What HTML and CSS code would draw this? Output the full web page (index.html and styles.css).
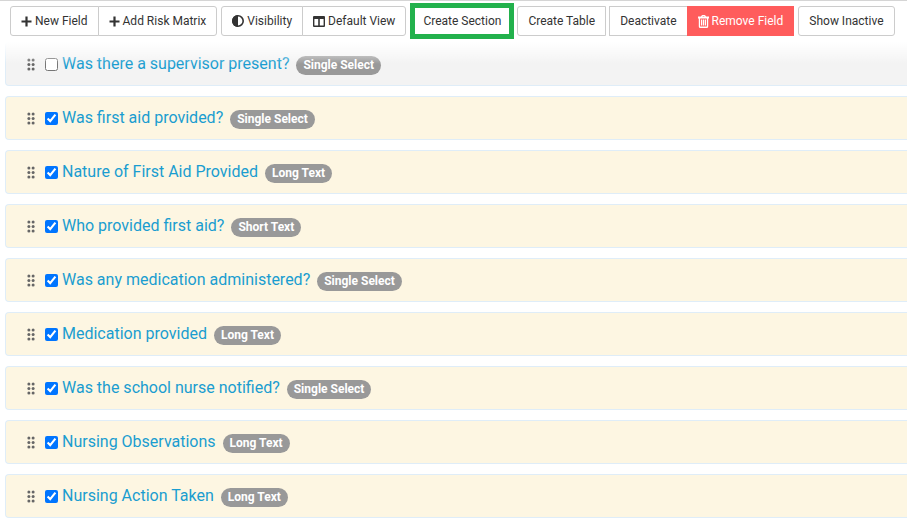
FILE: index.html
```html
<!DOCTYPE html>
<html lang="en">
<head>
<meta charset="utf-8">
<title>Form fields</title>
<link rel="stylesheet" href="styles.css">
</head>
<body>
<svg class="defs" aria-hidden="true">
  <symbol id="plus" viewBox="0 0 11 11"><path d="M4.4 0.5h2.2v3.9h3.9v2.2H6.6v3.9H4.4V6.6H.5V4.4h3.9z"/></symbol>
  <symbol id="contrast" viewBox="0 0 12 12"><circle cx="6" cy="6" r="5.2" fill="none" stroke="currentColor" stroke-width="1.6"/><path d="M6 0a6 6 0 0 0 0 12z"/></symbol>
  <symbol id="columns" viewBox="0 0 12 11"><path fill-rule="evenodd" d="M1 0h10a1 1 0 0 1 1 1v9a1 1 0 0 1-1 1H1a1 1 0 0 1-1-1V1a1 1 0 0 1 1-1zm.4 3v6.4h3.8V3zm5.4 0v6.4h3.8V3z"/></symbol>
  <symbol id="trash" viewBox="0 0 11 13"><path fill-rule="evenodd" d="M3 1.6 3.6.6Q3.9 0 4.5 0h2q.6 0 .9.6l.6 1h3v1.8h-.8v8q0 1.6-1.5 1.6H2.3Q.8 13 .8 11.4v-8H0V1.6zm1.5 0h2l-.3-.5H4.8zM2.1 3.4v8.2h6.8V3.4zM3 4.6h1.2v5.8H3zm1.9 0h1.2v5.8H4.9zm1.9 0H8v5.8H6.8z"/></symbol>
  <symbol id="grip" viewBox="0 0 8 13"><circle cx="1.9" cy="2" r="1.5"/><circle cx="6.1" cy="2" r="1.5"/><circle cx="1.9" cy="6.5" r="1.5"/><circle cx="6.1" cy="6.5" r="1.5"/><circle cx="1.9" cy="11" r="1.5"/><circle cx="6.1" cy="11" r="1.5"/></symbol>
</svg>

<header class="toolbar">
  <div class="group">
    <button class="btn" type="button"><svg class="icon plus"><use href="#plus"/></svg>New Field</button>
    <button class="btn" type="button"><svg class="icon plus"><use href="#plus"/></svg>Add Risk Matrix</button>
  </div>
  <div class="group">
    <button class="btn" type="button"><svg class="icon contrast"><use href="#contrast"/></svg>Visibility</button>
    <button class="btn" type="button"><svg class="icon columns"><use href="#columns"/></svg>Default View</button>
  </div>
  <div class="group actions">
    <button class="btn highlight" type="button">Create Section</button>
    <button class="btn table-btn" type="button">Create Table</button>
    <div class="group joined">
      <button class="btn" type="button">Deactivate</button>
      <button class="btn danger" type="button"><svg class="icon trash"><use href="#trash"/></svg>Remove Field</button>
    </div>
  </div>
  <button class="btn" type="button">Show Inactive</button>
</header>

<main>
<ul class="fields">
  <li class="field"><svg class="grip"><use href="#grip"/></svg><input type="checkbox" id="f1"><label for="f1">Was there a supervisor present?</label><span class="badge">Single Select</span></li>
  <li class="field selected"><svg class="grip"><use href="#grip"/></svg><input type="checkbox" id="f2" checked><label for="f2">Was first aid provided?</label><span class="badge">Single Select</span></li>
  <li class="field selected"><svg class="grip"><use href="#grip"/></svg><input type="checkbox" id="f3" checked><label for="f3">Nature of First Aid Provided</label><span class="badge">Long Text</span></li>
  <li class="field selected"><svg class="grip"><use href="#grip"/></svg><input type="checkbox" id="f4" checked><label for="f4">Who provided first aid?</label><span class="badge">Short Text</span></li>
  <li class="field selected"><svg class="grip"><use href="#grip"/></svg><input type="checkbox" id="f5" checked><label for="f5">Was any medication administered?</label><span class="badge">Single Select</span></li>
  <li class="field selected"><svg class="grip"><use href="#grip"/></svg><input type="checkbox" id="f6" checked><label for="f6">Medication provided</label><span class="badge">Long Text</span></li>
  <li class="field selected"><svg class="grip"><use href="#grip"/></svg><input type="checkbox" id="f7" checked><label for="f7">Was the school nurse notified?</label><span class="badge">Single Select</span></li>
  <li class="field selected"><svg class="grip"><use href="#grip"/></svg><input type="checkbox" id="f8" checked><label for="f8">Nursing Observations</label><span class="badge">Long Text</span></li>
  <li class="field selected"><svg class="grip"><use href="#grip"/></svg><input type="checkbox" id="f9" checked><label for="f9">Nursing Action Taken</label><span class="badge">Long Text</span></li>
</ul>
</main>
</body>
</html>
```
FILE: styles.css
```css
* { box-sizing: border-box; }

body {
  margin: 0;
  background: #fff;
  color: #333;
  font: 12px/18px Roboto, "Liberation Sans", sans-serif;
}

.defs { position: absolute; width: 0; height: 0; }

/* Toolbar */
.toolbar {
  position: relative;
  display: flex;
  align-items: center;
  gap: 4px;
  padding: 2px 10px 3px;
  border-top: 1px solid #d5d5d5;
}

/* Fade of the scrolled list below the toolbar */
.toolbar::after {
  content: "";
  position: absolute;
  top: 100%;
  left: 0;
  right: 0;
  height: 22px;
  background: linear-gradient(#fff, rgba(255, 255, 255, 0));
  pointer-events: none;
}

.group { display: flex; align-items: center; }
.actions { gap: 3px; }

.btn {
  display: inline-flex;
  align-items: center;
  gap: 3px;
  height: 30px;
  margin: 0;
  padding: 0 10px;
  border: 1px solid #ccc;
  border-radius: 3px;
  background: #fff;
  color: #333;
  font: inherit;
  white-space: nowrap;
}

.group .btn:first-child { border-top-right-radius: 0; border-bottom-right-radius: 0; }
.group .btn:last-child { border-top-left-radius: 0; border-bottom-left-radius: 0; }
.group:not(.actions) > .btn + .btn { margin-left: -1px; }

.actions .highlight {
  height: 36px;
  padding: 0 8px;
  border: 5px solid #22b14c;
  border-radius: 0;
}

.actions .table-btn { border-radius: 3px 0 0 3px; }
.joined .btn, .actions .joined .btn { border-radius: 0; }

.btn.danger {
  border-color: #ff5c5c;
  background: #ff5c5c;
  color: #fff;
}

.icon { flex: none; fill: currentColor; }
.plus { width: 11px; height: 11px; }
.contrast { width: 12px; height: 12px; }
.columns { width: 12px; height: 11px; }
.trash { width: 11px; height: 13px; }

/* Field list */
.fields {
  display: flex;
  flex-direction: column;
  gap: 10px;
  margin: 0;
  padding: 0 0 0 5px;
  list-style: none;
}

.field {
  display: flex;
  align-items: center;
  height: 44px;
  padding-left: 21px;
  border: 1px solid #dfedf8;
  border-right: 0;
  border-radius: 4px 0 0 4px;
  background: #f3f3f3;
}

.field.selected { background: #fdf6e2; }

.grip { width: 8px; height: 13px; fill: #666; }

.field input {
  width: 13px;
  height: 13px;
  margin: 0 4px 0 10px;
}

.field label {
  color: #1a9dd0;
  font-size: 16px;
  line-height: 20px;
}

.badge {
  margin: 3px 0 0 7px;
  padding: 0 7px;
  border-radius: 10px;
  background: #999;
  color: #fff;
  font-weight: 700;
  line-height: 19px;
}
```
